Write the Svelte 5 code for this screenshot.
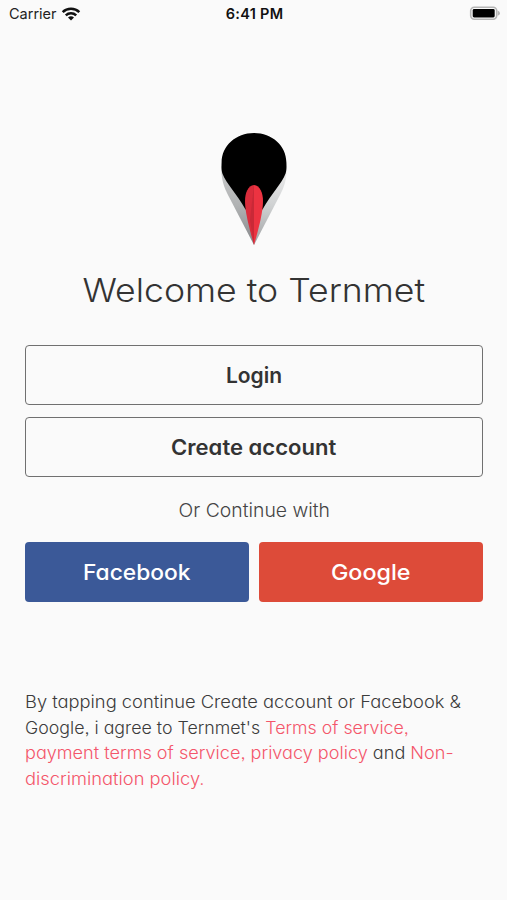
<script>
  const terms = [
    [{ text: 'By tapping continue Create account or Facebook &' }],
    [{ text: "Google, i agree to Ternmet's " }, { text: 'Terms of service,', link: true }],
    [
      { text: 'payment terms of service, privacy policy', link: true },
      { text: ' and ' },
      { text: 'Non-', link: true }
    ],
    [{ text: 'discrimination policy.', link: true }]
  ];
</script>

<main>
  <header>
    <div class="carrier">
      <span>Carrier</span>
      <svg width="20" height="14" viewBox="0 0 20 14" aria-hidden="true">
        <g fill="none" stroke="#111" stroke-width="2.5">
          <path d="M1.7 5.2 C6.2 .7 13.8 .7 18.3 5.2" />
          <path d="M4.8 8.4 C7.7 5.6 12.3 5.6 15.2 8.4" />
        </g>
        <path d="M7 10.5 Q10 8.1 13 10.5 L10 13.6 Z" fill="#111" />
      </svg>
    </div>
    <time>6:41 PM</time>
    <svg class="battery" width="32" height="15" viewBox="0 0 32 15" aria-hidden="true">
      <rect x="1.7" y="1.2" width="26" height="12" rx="3.6" fill="#fafafa" stroke="#b5b5b5" stroke-width="1.6" />
      <rect x="3.7" y="3.1" width="22" height="8.4" rx="1.4" fill="#000" />
      <path d="M28.7 4.6 Q31 5.7 31 7.2 Q31 8.7 28.7 9.8 Z" fill="#b5b5b5" />
    </svg>
  </header>

  <svg class="logo" width="68" height="114" viewBox="0 0 68 114" aria-label="Ternmet">
    <defs>
      <linearGradient id="wingLeft" x1="0" y1="0" x2="0" y2="1">
        <stop offset="0" stop-color="#c9cacb" />
        <stop offset=".5" stop-color="#b0b2b3" />
        <stop offset="1" stop-color="#858789" />
      </linearGradient>
      <linearGradient id="wingRight" x1="0" y1="0" x2="0" y2="1">
        <stop offset="0" stop-color="#f0f0f0" />
        <stop offset=".5" stop-color="#cfd1d2" />
        <stop offset="1" stop-color="#a0a2a4" />
      </linearGradient>
    </defs>
    <path d="M1.5 34 C.8 47 4 55 8 63 L34 113 V60 Z" fill="url(#wingLeft)" />
    <path d="M66.5 34 C67.2 47 64 55 60 63 L34 113 V60 Z" fill="url(#wingRight)" />
    <path d="M34 1 C16 1 1.6 13.8 1.6 30.5 C1.4 35 1.4 38 2.4 41.5 C4.5 47 8 51.5 11.3 56.3 C16.5 63.5 21 69.5 25.5 77.5 H42.5 C47 69.5 51.5 63.5 56.7 56.3 C60 51.5 63.5 47 65.6 41.5 C66.6 38 66.6 35 66.4 30.5 C66.4 13.8 52 1 34 1 Z" fill="#000" />
    <path d="M34 53 C28 53.5 25 61 25 69 C25 79 28.5 94 34 113 Z" fill="#d92c3b" />
    <path d="M34 53 C40 53.5 43 61 43 69 C43 79 39.5 94 34 113 Z" fill="#ec3341" />
    <path d="M34 53 V112 L30 88 Z" fill="#b92534" opacity=".5" />
  </svg>

  <h1><span>Welcome to Ternmet</span></h1>

  <div class="accounts">
    <button class="login"><span>Login</span></button>
    <button class="create"><span>Create account</span></button>
  </div>

  <p class="or"><span>Or Continue with</span></p>

  <div class="social">
    <button class="facebook"><span>Facebook</span></button>
    <button class="google"><span>Google</span></button>
  </div>

  <p class="terms">
    {#each terms as line, i}
      <span class="line line-{i}">{#each line as part}<span class:link={part.link}>{part.text}</span>{/each}</span>
    {/each}
  </p>
</main>

<style>
  :global(body) {
    background: #fafafa;
  }
  main {
    box-sizing: border-box;
    height: 900px;
    padding: 0 24px 0 25px;
    display: flex;
    flex-direction: column;
    background: #fafafa;
    color: #333;
    font-family: Inter, 'Open Sans', sans-serif;
    font-feature-settings: 'cv11', 'ss03';
    overflow: hidden;
  }
  header {
    height: 27px;
    margin: 0 -18px 0 -16px;
    display: grid;
    grid-template-columns: 1fr auto 1fr;
    align-items: center;
    font-feature-settings: normal;
    font-size: 14.5px;
    color: #222;
  }
  .carrier {
    display: flex;
    align-items: center;
    gap: 4px;
  }
  time {
    font-weight: 600;
    letter-spacing: 0.3px;
    color: #111;
    margin-right: 1px;
  }
  .battery {
    justify-self: end;
  }
  .logo {
    flex: none;
    align-self: center;
    margin-top: 105px;
  }
  h1 span,
  .or span,
  button span {
    display: inline-block;
    transform: scaleX(var(--stretch, 1));
  }
  h1 {
    --stretch: 1.079;
    margin: 22px 0 0;
    height: 44px;
    line-height: 44px;
    text-align: center;
    white-space: nowrap;
    font-weight: 300;
    font-size: 33px;
  }
  .accounts {
    display: flex;
    flex-direction: column;
    gap: 12px;
    margin-top: 33px;
  }
  button {
    box-sizing: border-box;
    height: 60px;
    padding: 0;
    border: 0;
    border-radius: 4px;
    font: inherit;
    font-feature-settings: inherit;
    font-size: 21px;
    color: #333;
  }
  .accounts button {
    border: 1.4px solid #707070;
    background: #fafafa;
    font-weight: 600;
  }
  .login {
    --stretch: 1;
  }
  .create {
    --stretch: 1.05;
  }
  .or {
    --stretch: 1.047;
    margin: 19px 0 0;
    height: 28px;
    line-height: 28px;
    text-align: center;
    font-size: 18.5px;
    font-weight: 300;
    color: #444;
  }
  .social {
    display: grid;
    grid-template-columns: 1fr 1fr;
    gap: 10px;
    margin-top: 18px;
  }
  .social button {
    color: #fff;
    font-weight: 500;
    font-size: 21.5px;
  }
  .social .facebook {
    --stretch: 1.06;
    background: #3b5998;
  }
  .social .google {
    --stretch: 1.085;
    background: #dd4b39;
  }
  .terms {
    margin: 88px 0 0;
    font-size: 17px;
    line-height: 25.7px;
    font-weight: 300;
    color: #3c3c3c;
  }
  .line {
    display: block;
    white-space: pre;
    transform-origin: left;
    transform: scaleX(var(--stretch));
  }
  .line-0,
  .line-3 {
    --stretch: 1.077;
  }
  .line-1 {
    --stretch: 1.046;
  }
  .line-2 {
    --stretch: 1.064;
  }
  .link {
    color: #f4566a;
  }
</style>
